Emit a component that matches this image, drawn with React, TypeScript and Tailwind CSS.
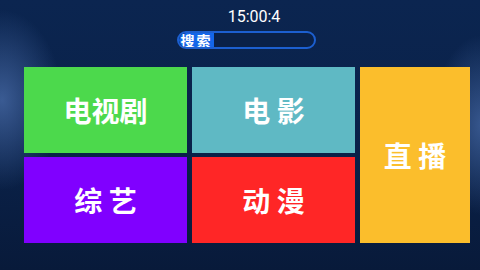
export default function App() {
  const cjk = { fontFamily: '"Noto Sans CJK SC", "Noto Sans", sans-serif' }

  return (
    <div
      className="w-[480px] h-[270px] overflow-hidden flex flex-col items-center bg-[#0b2249]"
      style={{
        background:
          'radial-gradient(ellipse 60px 90px at 2px 100px, rgba(70,105,165,0.8), transparent 100%), radial-gradient(ellipse 50px 90px at 482px 125px, rgba(70,105,165,0.75), transparent 100%), linear-gradient(180deg, #0b2550 0%, #0a2148 60%, #081a3a 100%)',
      }}
    >
      <div
        className="mt-[7px] ml-[28px] h-[20px] leading-[20px] text-[16px] text-white"
        style={{ fontFamily: 'Roboto, "Liberation Sans", sans-serif' }}
      >
        15:00:4
      </div>
      <div className="mt-[4px] ml-[12px] w-[139px] h-[18px] rounded-full border-2 border-[#1c5fd0] bg-[#0a2148] flex items-center overflow-hidden">
        <span
          className="h-full flex items-center pl-[2px] pr-[1px] bg-[#1466e8] text-white text-[14px] leading-none font-bold tracking-[2px] rounded-l-full"
          style={cjk}
        >
          搜索
        </span>
      </div>
      <div
        className="mt-[18px] self-start ml-[24px] grid grid-cols-[163px_163px_110px] grid-rows-[86px_86px] gap-x-[5px] gap-y-[4px] text-white font-bold text-[28px]"
        style={cjk}
      >
        <div className="bg-[#4cd94c] flex items-center justify-center">电视剧</div>
        <div className="bg-[#5fb9c4] flex items-center justify-center">电 影</div>
        <div className="row-span-2 bg-[#fbbe2c] flex items-center justify-center">直 播</div>
        <div className="bg-[#8000ff] flex items-center justify-center">综 艺</div>
        <div className="bg-[#ff2626] flex items-center justify-center">动 漫</div>
      </div>
    </div>
  )
}
